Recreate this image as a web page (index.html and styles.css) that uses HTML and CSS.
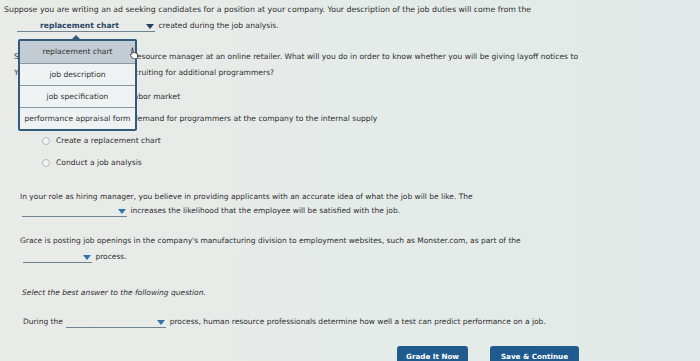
FILE: index.html
```html
<!DOCTYPE html>
<html lang="en">
<head>
    <meta charset="UTF-8">
    <title>Job Analysis Assignment</title>
    <link rel="stylesheet" href="styles.css">
</head>
<body>
<div class="page">
    <div class="item first">
        <p class="line lead">Suppose you are writing an ad seeking candidates for a position at your company. Your description of the job duties will come from the</p>
        <p class="line blank-line">
            <span class="blank b1">
                <span class="choice">replacement chart</span><span class="arrow dark"></span>
                <span class="menu">
                    <span class="menu-item active">replacement chart</span>
                    <span class="menu-item">job description</span>
                    <span class="menu-item">job specification</span>
                    <span class="menu-item">performance appraisal form</span>
                    <svg class="cursor" width="10" height="12" viewBox="0 0 10 12">
                        <path d="M3 1.2c.6 0 1 .4 1 1V6l.2-.3c.5-.4 1.2-.3 1.5.2.5-.3 1.1-.2 1.4.3.5-.2 1.1.1 1.2.6l.3 2.4c.1.9-.2 1.7-.8 2.3L7.4 11.8H3.9L1.5 8.6c-.4-.5-.3-1.1.1-1.4.4-.3.9-.2 1.3.2V2.2c0-.6.4-1 1-1z" fill="#fff" stroke="#222" stroke-width=".8"/>
                    </svg>
                </span>
            </span> created during the job analysis.
        </p>
    </div>

    <div class="item question">
        <p class="line">Suppose that you are a human resource manager at an online retailer. What will you do in order to know whether you will be giving layoff notices to</p>
        <p class="line">Your current programmers or recruiting for additional programmers?</p>
        <ul class="options">
            <li><span class="radio"></span>Analyze the overall labor market</li>
            <li><span class="radio"></span>Compare the future demand for programmers at the company to the internal supply</li>
            <li><span class="radio"></span>Create a replacement chart</li>
            <li><span class="radio"></span>Conduct a job analysis</li>
        </ul>
    </div>

    <div class="item role">
        <p class="line">In your role as hiring manager, you believe in providing applicants with an accurate idea of what the job will be like. The</p>
        <p class="line blank-line"><span class="blank b2"><span class="choice">&nbsp;</span><span class="arrow"></span></span> increases the likelihood that the employee will be satisfied with the job.</p>
    </div>

    <div class="item grace">
        <p class="line">Grace is posting job openings in the company's manufacturing division to employment websites, such as Monster.com, as part of the</p>
        <p class="line blank-line"><span class="blank b3"><span class="choice">&nbsp;</span><span class="arrow"></span></span> process.</p>
    </div>

    <p class="line instruction">Select the best answer to the following question.</p>

    <p class="line during">During the <span class="blank b4"><span class="choice">&nbsp;</span><span class="arrow"></span></span> process, human resource professionals determine how well a test can predict performance on a job.</p>

    <div class="actions">
        <button class="btn grade">Grade It Now</button>
        <button class="btn save">Save &amp; Continue</button>
    </div>
</div>
</body>
</html>
```

FILE: styles.css
```css
body {
    margin: 0;
    padding: 0;
    background: linear-gradient(90deg, #e9ebe8 0%, #e5ebe9 50%, #e1eae8 100%);
    font-family: "DejaVu Sans", Verdana, sans-serif;
    font-size: 7.6px;
    color: #2f2f2f;
    width: 700px;
    height: 361px;
    overflow: hidden;
}
.page {
    padding-top: 2px;
}
p {
    margin: 0;
}
.line {
    line-height: 16px;
    white-space: nowrap;
}
.first {
    padding-left: 4px;
}
.first .lead {
    font-size: 7.8px;
}
.first .blank-line {
    padding-left: 12px;
}
.blank {
    display: inline-flex;
    align-items: center;
    line-height: 10px;
    border-bottom: 1px solid #6f8290;
    position: relative;
    margin: 0 1px;
}
.choice {
    flex: 1;
    text-align: center;
    font-weight: bold;
    color: #2c4767;
}
.arrow {
    width: 0;
    height: 0;
    border-left: 4.5px solid transparent;
    border-right: 4.5px solid transparent;
    border-top: 5px solid #2f74ab;
    margin: 0 1px 0 4px;
}
.arrow.dark {
    border-top-color: #24405e;
}
.b1 { width: 138px; }
.b2 { width: 105px; }
.b3 { width: 69px; }
.b4 { width: 100px; }

/* open dropdown */
.menu {
    position: absolute;
    left: 1px;
    top: 18px;
    width: 115px;
    display: flex;
    flex-direction: column;
    background: #eef2f3;
    border: 2px solid #33597b;
    border-radius: 2px;
    z-index: 2;
    font-weight: normal;
}
.menu::before {
    content: "";
    position: absolute;
    left: 52px;
    top: -6px;
    border-left: 4px solid transparent;
    border-right: 4px solid transparent;
    border-bottom: 4px solid #33597b;
}
.menu-item {
    display: block;
    text-align: center;
    color: #333;
    line-height: 21px;
    border-top: 1px solid #8796a0;
}
.menu-item:first-child {
    border-top: none;
    line-height: 22px;
}
.menu-item:last-child {
    line-height: 23px;
}
.menu-item.active {
    background: #c3ccd2;
}
.cursor {
    position: absolute;
    left: 109px;
    top: 6px;
}

.question {
    padding-left: 14px;
    margin-top: 15px;
}
.options {
    list-style: none;
    margin: 8px 0 0;
    padding: 0 0 0 28px;
}
.options li {
    display: flex;
    align-items: center;
    line-height: 16px;
    margin-bottom: 6px;
    white-space: nowrap;
}
.radio {
    width: 6px;
    height: 6px;
    border: 1px solid #b3bbc0;
    border-radius: 50%;
    background: #f3f5f5;
    margin-right: 6px;
}
.role,
.grace,
.instruction,
.during {
    font-size: 7.5px;
}
.role {
    padding-left: 20px;
    margin-top: 18px;
}
.role .blank-line {
    padding-left: 1px;
    margin-top: -2px;
}
.grace {
    padding-left: 20px;
    margin-top: 14px;
}
.grace .blank-line {
    padding-left: 2px;
}
.instruction {
    padding-left: 22px;
    margin-top: 20px;
    font-style: italic;
}
.during {
    padding-left: 23px;
    margin-top: 13px;
}
.actions {
    display: flex;
    gap: 22px;
    padding-left: 397px;
    margin-top: 16px;
}
.btn {
    font-family: "DejaVu Sans", Verdana, sans-serif;
    font-size: 7.2px;
    font-weight: bold;
    color: #fff;
    background: #1f5b8f;
    border: none;
    border-radius: 3px;
    height: 20px;
    padding: 0;
}
.grade { width: 71px; }
.save { width: 89px; }
```
